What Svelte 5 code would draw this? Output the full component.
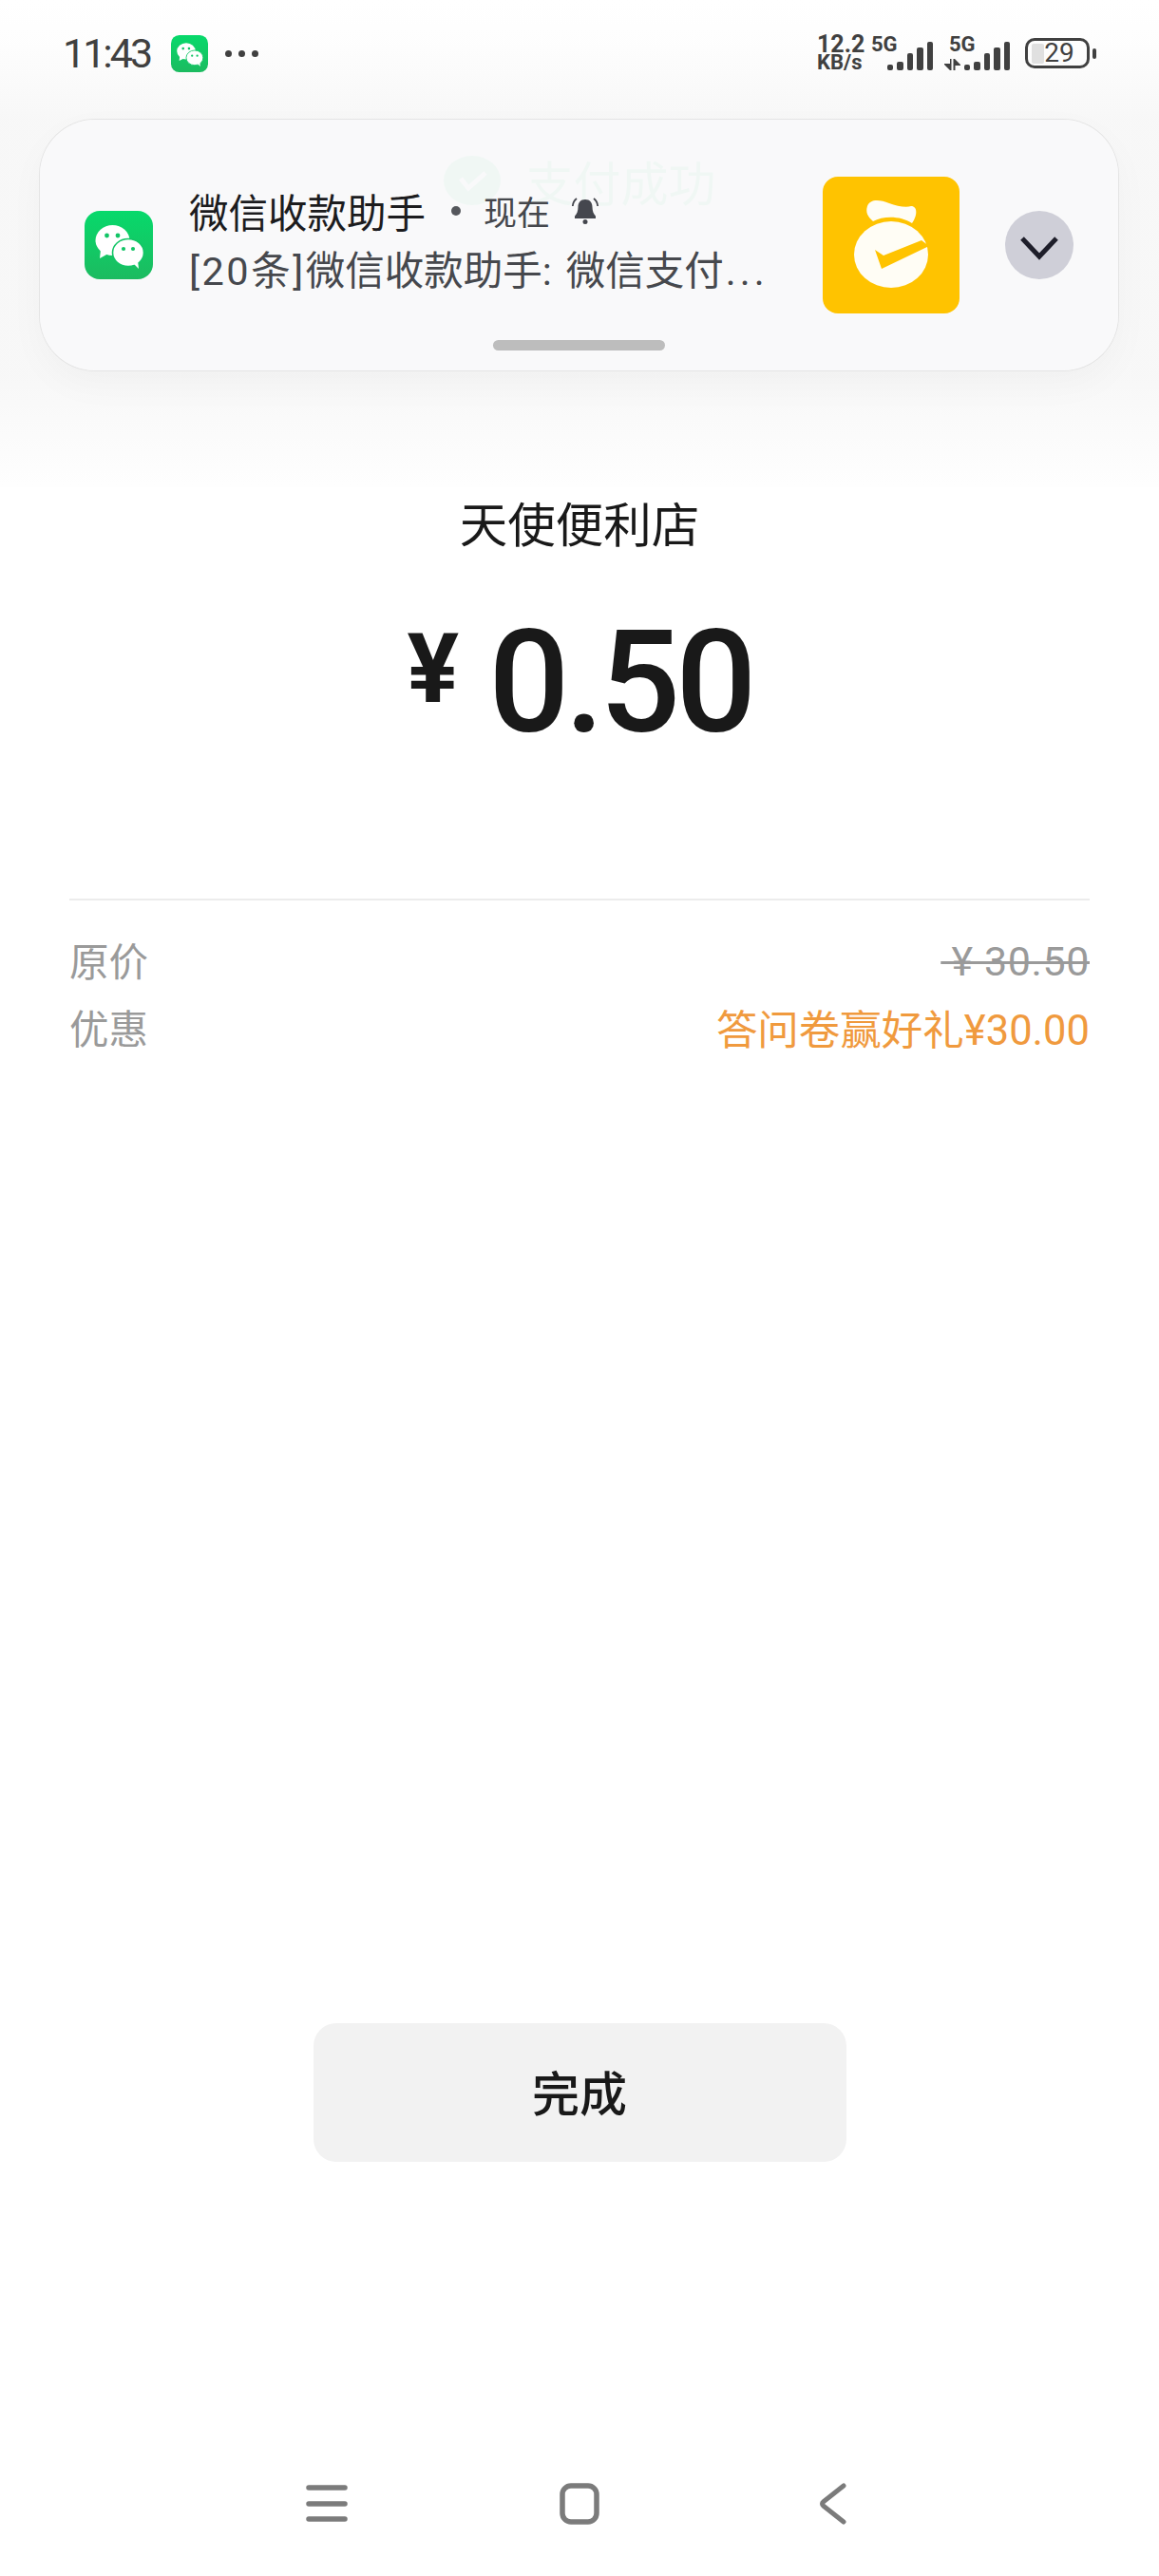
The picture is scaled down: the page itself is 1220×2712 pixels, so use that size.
<script>
  const signalHeights = [6, 9, 18, 24, 30];
  const priceRows = [
    { label: '原价', value: '\u00a0¥ 30.50', kind: 'old' },
    { label: '优惠', value: '答问卷赢好礼¥30.00', kind: 'promo' }
  ];
</script>

{#snippet wechatIcon()}
  <svg viewBox="0 0 72 72" class="wechat-svg" aria-hidden="true">
    <defs>
      <linearGradient id="wx" x1="0" y1="0" x2="0" y2="1">
        <stop offset="0" stop-color="#07d96b" />
        <stop offset="1" stop-color="#1cbb60" />
      </linearGradient>
    </defs>
    <rect width="72" height="72" rx="16" fill="url(#wx)" />
    <ellipse cx="29.5" cy="31" rx="18" ry="16" fill="#fff" />
    <path d="M17 41l-1 9 9-5z" fill="#fff" />
    <ellipse cx="46" cy="44" rx="16.5" ry="14.5" fill="#fff" stroke="#12c566" stroke-width="1.6" />
    <path d="M52 56l5 5-1-9z" fill="#fff" />
    <circle cx="23.5" cy="26" r="2.4" fill="#12c566" />
    <circle cx="35" cy="26" r="2.4" fill="#12c566" />
    <circle cx="41" cy="40" r="2.1" fill="#12c566" />
    <circle cx="51" cy="40" r="2.1" fill="#12c566" />
  </svg>
{/snippet}

{#snippet signal()}
  <span class="bars">
    {#each signalHeights as h}
      <i style="height: {h}px"></i>
    {/each}
  </span>
{/snippet}

<div class="page">
  <div class="scrim">
    <div class="notif">
      <div class="app-icon">{@render wechatIcon()}</div>
      <div class="notif-text">
        <div class="notif-title">
          <span class="app-name">微信收款助手</span>
          <span class="sep"></span>
          <span class="when">现在</span>
          <svg class="bell" viewBox="0 0 30 30" aria-hidden="true">
            <path d="M15 3c-5 0-7.500 3.500-7.500 8 0 4.500-1.500 7.500-3.500 9.500v2.500h22v-2.500c-2-2-3.500-5-3.500-9.500 0-4.500-2.500-8-7.500-8z" fill="#45474e" />
            <circle cx="15" cy="26.500" r="2.500" fill="#45474e" />
            <path d="M6 2C3.500 4 2 7 1.800 10M24 2c2.500 2 4 5 4.200 8" stroke="#45474e" stroke-width="1.800" fill="none" />
          </svg>
        </div>
        <div class="notif-sub"><span class="count">[20条]</span>微信收款助手<span class="colon">:</span>微信支付<span class="more">...</span></div>
      </div>
      <div class="thumb">
        <svg viewBox="0 0 144 144" aria-hidden="true">
          <path d="M47 31C50 23 60 24 70 28 78 31 88 33 93 31 100 31 100 41 94 49 82 41 64 41 53 47 47 42 45 37 47 31z" fill="#fffdf5" />
          <ellipse cx="72" cy="82" rx="39" ry="35" fill="#fffdf5" />
          <path d="M55 77l9 6 40-16 8 6-50 24z" fill="#ffc300" />
        </svg>
      </div>
      <button class="chevron" aria-label="展开">
        <svg viewBox="0 0 72 72" aria-hidden="true">
          <path d="M18 29l18 19 18-19" fill="none" stroke="#1e1e2a" stroke-width="5" />
        </svg>
      </button>
      <div class="handle"></div>
    </div>
  </div>

  <header class="status">
    <div class="status-left">
      <span class="time">11:43</span>
      <span class="status-app">{@render wechatIcon()}</span>
      <span class="dots"><i></i><i></i><i></i></span>
    </div>
    <div class="status-right">
      <span class="speed"><b>12.2</b><b class="unit">KB/s</b></span>
      <span class="net">
        <b class="gen">5G</b>
        {@render signal()}
      </span>
      <span class="net second">
        <b class="gen">5G</b>
        <svg class="arrows" viewBox="0 0 17 12" aria-hidden="true">
          <path d="M0 5h6V0h1.500v12H6L0 6z M9.500 12V0L11 0l6 6v1h-5.500v5z" fill="#404040" />
        </svg>
        {@render signal()}
      </span>
      <span class="battery">
        <span class="battery-body">
          <span class="battery-fill"></span>
          <span class="battery-num">29</span>
        </span>
        <span class="battery-tip"></span>
      </span>
    </div>
  </header>

  <main class="content">
    <div class="success">
      <svg class="success-mark" viewBox="0 0 60 52" aria-hidden="true">
        <ellipse cx="30" cy="26" rx="30" ry="26" fill="#07c160" />
        <path d="M18 24l8 10 18-16" fill="none" stroke="#fff" stroke-width="5" />
      </svg>
      <span>支付成功</span>
    </div>

    <div class="store">天使便利店</div>
    <div class="amount"><span class="yen">¥</span><span class="num">0.50</span></div>

    <div class="rows">
      {#each priceRows as row}
        <div class="row">
          <span class="label">{row.label}</span>
          <span class={row.kind}>{row.value}</span>
        </div>
      {/each}
    </div>

    <button class="done">完成</button>
  </main>

  <nav class="navbar">
    <svg viewBox="0 0 44 44" aria-hidden="true">
      <path d="M3 5h38M3 22h38M3 38h38" stroke="#7b7b7b" stroke-width="5.500" stroke-linecap="round" />
    </svg>
    <svg viewBox="0 0 44 44" aria-hidden="true">
      <rect x="4" y="3" width="36" height="38" rx="9" fill="none" stroke="#7b7b7b" stroke-width="5.500" />
    </svg>
    <svg viewBox="0 0 44 44" aria-hidden="true">
      <path d="M34 3L12.500 20a2.500 2.500 0 0 0 0 4L34 41" fill="none" stroke="#7b7b7b" stroke-width="5" stroke-linecap="round" />
    </svg>
  </nav>
</div>

<style>
  :global(body) {
    background: #fff;
  }

  .page {
    position: relative;
    display: flex;
    flex-direction: column;
    width: 1220px;
    height: 2712px;
    overflow: hidden;
    background: #fff;
    color: #191919;
    font-family: Roboto, "Noto Sans CJK SC", sans-serif;
  }

  /* Notification layer over the page */
  .scrim {
    position: absolute;
    top: 0;
    left: 0;
    right: 0;
    box-sizing: border-box;
    height: 513px;
    padding: 126px 43px 0 42px;
    background: linear-gradient(to bottom, rgba(247, 247, 247, 0) 0, rgba(247, 247, 247, 0.2) 45px, rgba(247, 247, 247, 0.95) 125px, rgba(247, 247, 247, 0.95) 395px, rgba(254, 254, 254, 0.95) 513px);
  }

  .notif {
    position: relative;
    z-index: 4;
    display: flex;
    align-items: center;
    box-sizing: border-box;
    height: 264px;
    padding: 0 47px;
    border-radius: 58px;
    background: rgba(249, 249, 250, 0.965);
    box-shadow: 0 0 0 1px #e4e4e4, 0 14px 40px rgba(0, 0, 0, 0.03);
  }

  .app-icon {
    flex: none;
    width: 72px;
    height: 72px;
  }

  .wechat-svg {
    display: block;
    width: 100%;
    height: 100%;
  }

  .notif-text {
    flex: 1;
    min-width: 0;
    margin: 0 0 9px 38px;
  }

  .notif-title {
    display: flex;
    align-items: center;
    height: 60px;
    margin-bottom: 4px;
  }

  .app-name {
    font-size: 41.500px;
    color: #1c1c1e;
  }

  .sep {
    width: 10px;
    height: 10px;
    margin: 0 24px 0 27px;
    border-radius: 50%;
    background: #55575c;
  }

  .when {
    font-size: 35px;
    color: #45474c;
  }

  .bell {
    width: 30px;
    height: 30px;
    margin-left: 22px;
  }

  .notif-sub {
    height: 60px;
    line-height: 60px;
    font-size: 41.500px;
    white-space: nowrap;
    color: #46484d;
  }

  .count {
    letter-spacing: 2.500px;
  }

  .colon {
    margin-right: 15px;
  }

  .more {
    margin-left: 2px;
    letter-spacing: 4px;
  }

  .thumb {
    flex: none;
    width: 144px;
    height: 144px;
    border-radius: 16px;
    background: #ffc300;
  }

  .thumb svg,
  .chevron svg {
    display: block;
    width: 100%;
    height: 100%;
  }

  .chevron {
    flex: none;
    width: 72px;
    height: 72px;
    margin-left: 48px;
    padding: 0;
    border: 0;
    border-radius: 50%;
    background: #cfcfd8;
  }

  .handle {
    position: absolute;
    left: 477px;
    bottom: 21px;
    width: 181px;
    height: 11px;
    border-radius: 6px;
    background: #bdbdbd;
  }

  /* Status bar */
  .status {
    position: relative;
    z-index: 3;
    display: flex;
    flex: none;
    align-items: center;
    justify-content: space-between;
    box-sizing: border-box;
    height: 112px;
    padding: 0 66px;
    color: #404040;
  }

  .status-left,
  .status-right {
    display: flex;
    align-items: center;
  }

  .time {
    width: 93px;
    font-size: 43px;
    letter-spacing: -3px;
    white-space: nowrap;
  }

  .status-app {
    width: 39px;
    height: 39px;
    margin-left: 21px;
  }

  .dots {
    display: flex;
    gap: 7px;
    margin-left: 18px;
  }

  .dots i {
    width: 7px;
    height: 7px;
    border-radius: 50%;
    background: #404040;
  }

  .status-right {
    height: 40px;
  }

  .speed {
    display: flex;
    flex-direction: column;
    width: 57px;
    font-size: 25px;
    line-height: 19px;
  }

  .unit {
    font-size: 22px;
  }

  .net {
    position: relative;
    display: flex;
    align-items: flex-end;
    justify-content: flex-end;
    width: 65px;
    height: 36px;
  }

  .second {
    width: 81px;
  }

  .gen {
    position: absolute;
    top: 0;
    left: 0;
    font-size: 22px;
    line-height: 18px;
  }

  .second .gen {
    left: 17px;
  }

  .arrows {
    width: 17px;
    height: 12px;
    margin-right: 4px;
  }

  .bars {
    display: flex;
    align-items: flex-end;
    gap: 4px;
  }

  .bars i {
    width: 6.400px;
    border-radius: 2px;
    background: #404040;
  }

  .battery {
    display: flex;
    align-items: center;
    margin-left: 16px;
  }

  .battery-body {
    position: relative;
    display: block;
    box-sizing: border-box;
    width: 68px;
    height: 32px;
    border: 3px solid #404040;
    border-radius: 10px;
  }

  .battery-fill {
    position: absolute;
    top: 3px;
    bottom: 2px;
    left: 4px;
    width: 13px;
    border-radius: 2px;
    background: #e0e0e0;
  }

  .battery-num {
    position: absolute;
    inset: 0;
    padding-left: 4px;
    text-align: center;
    font-size: 28px;
    line-height: 26px;
  }

  .battery-tip {
    width: 4px;
    height: 11px;
    margin-left: 3px;
    border-radius: 2px;
    background: #404040;
  }

  /* Page body */
  .content {
    display: flex;
    flex: 1;
    flex-direction: column;
    align-items: center;
    min-height: 0;
  }

  .success {
    position: relative;
    z-index: 1;
    display: flex;
    align-items: center;
    gap: 27px;
    height: 52px;
    margin-top: 52px;
    font-size: 50px;
    color: #07c160;
  }

  .success-mark {
    width: 60px;
    height: 52px;
  }

  .store {
    margin-top: 308px;
    font-size: 50.500px;
    line-height: 60px;
  }

  .amount {
    display: flex;
    align-items: center;
    gap: 31px;
    height: 150px;
    margin-top: 59px;
  }

  .yen {
    font-size: 102px;
    font-weight: 700;
    line-height: 1;
    margin-bottom: 28px;
  }

  .num {
    font-size: 150px;
    font-weight: 500;
    letter-spacing: -5px;
    line-height: 1;
    padding-top: 2px;
  }

  .rows {
    align-self: stretch;
    margin: 153px 73px 0;
    padding-top: 32px;
    border-top: 2px solid #ececec;
  }

  .row {
    display: flex;
    align-items: center;
    justify-content: space-between;
    height: 60px;
    font-size: 41.500px;
    color: #9a9a9a;
  }

  .row + .row {
    margin-top: 11px;
  }

  .old {
    padding-top: 3px;
    font-size: 43px;
    letter-spacing: 0.600px;
    text-decoration: line-through;
    text-decoration-thickness: 3px;
  }

  .promo {
    font-size: 43.500px;
    color: #f09a3e;
  }

  .done {
    box-sizing: border-box;
    width: 561px;
    height: 146px;
    margin-top: auto;
    margin-bottom: 338px;
    padding: 0 0 4px;
    border: 0;
    border-radius: 24px;
    background: #f2f2f2;
    color: #191919;
    font-family: inherit;
    font-size: 50px;
    font-weight: 500;
  }

  .navbar {
    display: flex;
    flex: none;
    justify-content: center;
    gap: 222px;
    padding-bottom: 54px;
  }

  .navbar svg {
    width: 44px;
    height: 44px;
  }
</style>
